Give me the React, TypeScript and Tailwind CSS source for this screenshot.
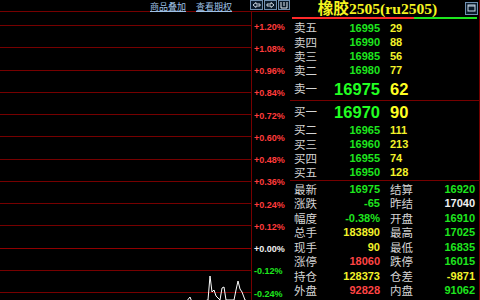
import React from 'react';

const GRID = '#760000';

const levels = [
  { t: '+1.20%', c: 'text-[#ff3b3b]' },
  { t: '+1.08%', c: 'text-[#ff3b3b]' },
  { t: '+0.96%', c: 'text-[#ff3b3b]' },
  { t: '+0.84%', c: 'text-[#ff3b3b]' },
  { t: '+0.72%', c: 'text-[#ff3b3b]' },
  { t: '+0.60%', c: 'text-[#ff3b3b]' },
  { t: '+0.48%', c: 'text-[#ff3b3b]' },
  { t: '+0.36%', c: 'text-[#ff3b3b]' },
  { t: '+0.24%', c: 'text-[#ff3b3b]' },
  { t: '+0.12%', c: 'text-[#ff3b3b]' },
  { t: '+0.00%', c: 'text-[#f0f0f0]' },
  { t: '-0.12%', c: 'text-[#1ee61e]' },
  { t: '-0.24%', c: 'text-[#1ee61e]' },
];

const sells = [
  ['卖五', '16995', '29'],
  ['卖四', '16990', '88'],
  ['卖三', '16985', '56'],
  ['卖二', '16980', '77'],
];

const buys = [
  ['买二', '16965', '111'],
  ['买三', '16960', '213'],
  ['买四', '16955', '74'],
  ['买五', '16950', '128'],
];

const stats: [string, string, string, string, string, string][] = [
  ['最新', '16975', 'text-[#1ee61e]', '结算', '16920', 'text-[#1ee61e]'],
  ['涨跌', '-65', 'text-[#1ee61e]', '昨结', '17040', 'text-[#f0f0f0]'],
  ['幅度', '-0.38%', 'text-[#1ee61e]', '开盘', '16910', 'text-[#1ee61e]'],
  ['总手', '183890', 'text-[#f2f22a]', '最高', '17025', 'text-[#1ee61e]'],
  ['现手', '90', 'text-[#f2f22a]', '最低', '16835', 'text-[#1ee61e]'],
  ['涨停', '18060', 'text-[#ff4444]', '跌停', '16015', 'text-[#1ee61e]'],
  ['持仓', '128373', 'text-[#f2f22a]', '仓差', '-9871', 'text-[#f2f22a]'],
  ['外盘', '92828', 'text-[#ff4444]', '内盘', '91062', 'text-[#1ee61e]'],
];

const cjk = "font-['Noto_Sans_CJK_SC',sans-serif] leading-none";
const num = "font-['Liberation_Sans',Arial,sans-serif] font-bold leading-none";

function ToolButtons() {
  return (
    <div className="flex gap-[1px] pl-[1px]">
      <svg width="13" height="10" viewBox="0 0 13 10">
        <rect x="0.5" y="0.5" width="12" height="9" fill="#0a1a2a" stroke="#6f8fb0" />
        <path d="M3 5 L6 2.5 L6 4 L10 4 L10 6 L6 6 L6 7.5 Z" fill="none" stroke="#dfe8f0" strokeWidth="0.9" />
      </svg>
      <svg width="13" height="10" viewBox="0 0 13 10">
        <rect x="0.5" y="0.5" width="12" height="9" fill="#0a1a2a" stroke="#6f8fb0" />
        <path d="M10 5 L7 2.5 L7 4 L3 4 L3 6 L7 6 L7 7.5 Z" fill="none" stroke="#dfe8f0" strokeWidth="0.9" />
      </svg>
      <svg width="12" height="10" viewBox="0 0 12 10">
        <rect x="0.5" y="0.5" width="11" height="9" fill="#0a1a2a" stroke="#6f8fb0" />
        <path d="M3 2 L3 8 L9 8 L9 2" fill="none" stroke="#dfe8f0" strokeWidth="1" />
        <path d="M6 2 L6 6" fill="none" stroke="#dfe8f0" strokeWidth="1" />
      </svg>
    </div>
  );
}

function Chart() {
  const lines = levels.map((_, i) => 13 + i * 22.25);
  return (
    <svg width="251" height="288" className="block">
      {lines.map((y, i) => (
        <line key={i} x1="0" x2="251" y1={Math.round(y) + 0.5} y2={Math.round(y) + 0.5} stroke={i === 10 ? '#900000' : GRID} strokeWidth="1" />
      ))}
      <polyline
        fill="none"
        stroke="#ffffff"
        strokeWidth="1"
        points="160,292 175,291 186,290 190,285 192,290 204,289 208,288 210,264 212,280 214,278 216,284 220,288 222,276 224,275 226,288 234,288 236,278 238,269 240,277 242,280 245,288 250,290"
      />
    </svg>
  );
}

function Label({ t, extra = '' }: { t: string; extra?: string }) {
  return <span className={`${cjk} w-[40px] text-[11.5px] text-[#d4d4d4] ${extra}`}>{t}</span>;
}

export default function App() {
  return (
    <div className="w-[480px] h-[300px] bg-black flex overflow-hidden select-none">
      <div className="w-[290px] flex flex-col">
        <div className="h-[12px] flex items-start border-b border-[#760000]">
          <div className="w-[150px]" />
          <span className={`${cjk} text-[9px] mt-[2px] text-[#9fc0e6] underline`}>商品叠加</span>
          <span className={`${cjk} text-[9px] mt-[2px] text-[#9fc0e6] underline ml-[10px]`}>查看期权</span>
          <div className="flex-1" />
          <ToolButtons />
        </div>
        <div className="flex flex-1">
          <div className="w-[252px] border-r border-[#760000]">
            <Chart />
          </div>
          <div className="flex-1 flex flex-col pt-[4px] pl-[2px]">
            {levels.map((l) => (
              <div key={l.t} className={`h-[22.25px] flex items-center ${num} text-[9px] ${l.c}`}>
                {l.t}
              </div>
            ))}
          </div>
        </div>
      </div>

      <div className="w-[190px] flex flex-col border-r border-[#760000]">
        <div className="h-[17px] flex items-center">
          <div className="flex-1 flex justify-center">
            <span className="font-['Liberation_Serif','Noto_Sans_CJK_SC',serif] font-bold text-[15.6px] leading-none text-[#f5f520]">
              橡胶2505(ru2505)
            </span>
          </div>
          <svg width="13" height="13" viewBox="0 0 13 13" className="mr-[1px]">
            <rect x="0.5" y="0.5" width="12" height="12" fill="#0a1a2a" stroke="#6f8fb0" />
            <rect x="3" y="3" width="7" height="6" fill="none" stroke="#c8d8e8" strokeWidth="1" />
            <line x1="3" x2="10" y1="4" y2="4" stroke="#c8d8e8" />
          </svg>
        </div>
        <div className="h-[2px] mx-[2px] flex">
          <div className="w-[122px] bg-[#ff2a2a]" />
          <div className="flex-1 bg-[#1ee61e]" />
        </div>

        <div className="pt-[2px]">
          {sells.map(([l, p, v]) => (
            <div key={l} className="h-[14.25px] flex items-center pl-[4px]">
              <Label t={l} />
              <span className={`${num} w-[46px] text-right text-[11px] text-[#1ee61e]`}>{p}</span>
              <span className={`${num} ml-[10px] text-[11px] text-[#f2f22a]`}>{v}</span>
            </div>
          ))}
          <div className="h-[22px] flex items-center pl-[4px]">
            <Label t="卖一" />
            <span className={`${num} w-[46px] text-right text-[16.5px] text-[#22ff22]`}>16975</span>
            <span className={`${num} ml-[10px] text-[16.5px] text-[#ffff22]`}>62</span>
          </div>
        </div>

        <div className="border-t border-[#760000]">
          <div className="h-[22px] flex items-center pl-[4px]">
            <Label t="买一" />
            <span className={`${num} w-[46px] text-right text-[16.5px] text-[#22ff22]`}>16970</span>
            <span className={`${num} ml-[10px] text-[16.5px] text-[#ffff22]`}>90</span>
          </div>
          {buys.map(([l, p, v]) => (
            <div key={l} className="h-[14.25px] flex items-center pl-[4px]">
              <Label t={l} />
              <span className={`${num} w-[46px] text-right text-[11px] text-[#1ee61e]`}>{p}</span>
              <span className={`${num} ml-[10px] text-[11px] text-[#f2f22a]`}>{v}</span>
            </div>
          ))}
        </div>

        <div className="border-t border-[#760000] pt-[1px]">
          {stats.map(([l1, v1, c1, l2, v2, c2]) => (
            <div key={l1} className="h-[14.5px] flex items-center pl-[4px]">
              <Label t={l1} />
              <span className={`${num} w-[46px] text-right text-[11px] ${c1}`}>{v1}</span>
              <Label t={l2} extra="ml-[10px]" />
              <span className={`${num} w-[45px] text-right text-[11px] ${c2}`}>{v2}</span>
            </div>
          ))}
        </div>
      </div>
    </div>
  );
}
